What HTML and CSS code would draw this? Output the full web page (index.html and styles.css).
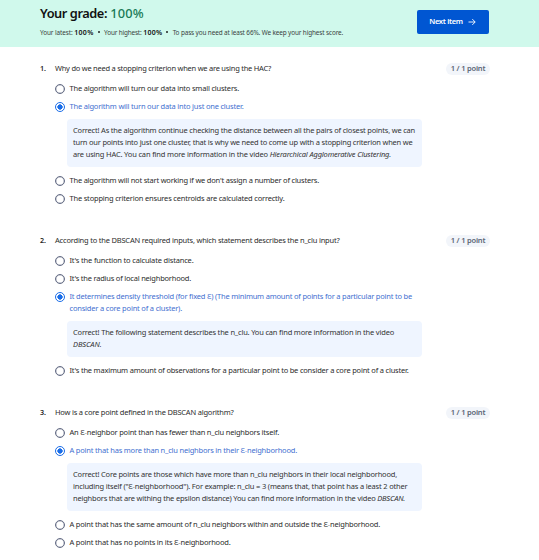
FILE: index.html
```html
<!DOCTYPE html>
<html lang="en"><head><meta charset="utf-8"><title>Quiz grade</title><link rel="stylesheet" href="styles.css"></head>
<body>
<header class="grade-bar">
<div class="grade-info"><h1><span data-w="67">Your grade:</span> <b class="score" data-w="33.5">100%</b></h1>
<p class="meta"><span data-w="32.5">Your latest:</span> <b data-w="19.5">100%</b><i class="dot"></i><span data-w="37.5">Your highest:</span> <b data-w="19">100%</b><i class="dot"></i><span data-w="170.5">To pass you need at least 66%. We keep your highest score.</span></p></div>
<button class="next"><span data-w="33.5">Next item</span><svg class="arrow" viewBox="0 0 8 8"><path d="M.5 4h6.6M4.3 1.1 7.2 4 4.3 6.9"/></svg></button>
</header>
<main>
<section class="question"><div class="prompt"><b class="num">1.</b><span data-w="216">Why do we need a stopping criterion when we are using the HAC?</span><b class="pill"><span data-w="34.5">1 / 1 point</span></b></div>
<div class="option"><i class="radio"></i><p><span data-w="169.5">The algorithm will turn our data into small clusters.</span></p></div>
<div class="option chosen"><i class="radio"></i><p><span data-w="174">The algorithm will turn our data into just one cluster.</span></p></div>
<p class="feedback"><span data-w="342">Correct! As the algorithm continue checking the distance between all the pairs of closest points, we can</span><br><span data-w="339.5">turn our points into just one cluster, that is why we need to come up with a stopping criterion when we</span><br><span data-w="318">are using HAC. You can find more information in the video <em>Hierarchical Agglomerative Clustering.</em></span></p>
<div class="option"><i class="radio"></i><p><span data-w="249.5">The algorithm will not start working if we don't assign a number of clusters.</span></p></div>
<div class="option"><i class="radio"></i><p><span data-w="215">The stopping criterion ensures centroids are calculated correctly.</span></p></div></section>
<section class="question"><div class="prompt"><b class="num">2.</b><span data-w="284.5">According to the DBSCAN required inputs, which statement describes the n_clu input?</span><b class="pill"><span data-w="34.5">1 / 1 point</span></b></div>
<div class="option"><i class="radio"></i><p><span data-w="124">It's the function to calculate distance.</span></p></div>
<div class="option"><i class="radio"></i><p><span data-w="121.5">It's the radius of local neighborhood.</span></p></div>
<div class="option chosen"><i class="radio"></i><p><span data-w="342.5">It determines density threshold (for fixed Ɛ) (The minimum amount of points for a particular point to be</span><br><span data-w="112.5">consider a core point of a cluster).</span></p></div>
<p class="feedback"><span data-w="321">Correct! The following statement describes the n_clu. You can find more information in the video</span><br><span data-w="28.5"><em>DBSCAN.</em></span></p>
<div class="option"><i class="radio"></i><p><span data-w="339">It's the maximum amount of observations for a particular point to be consider a core point of a cluster.</span></p></div></section>
<section class="question"><div class="prompt"><b class="num">3.</b><span data-w="178.5">How is a core point defined in the DBSCAN algorithm?</span><b class="pill"><span data-w="34.5">1 / 1 point</span></b></div>
<div class="option"><i class="radio"></i><p><span data-w="209.5">An Ɛ<span class="hyphen">-</span>neighbor point than has fewer than n_clu neighbors itself.</span></p></div>
<div class="option chosen"><i class="radio"></i><p><span data-w="227.5">A point that has more than n_clu neighbors in their Ɛ<span class="hyphen">-</span>neighborhood.</span></p></div>
<p class="feedback"><span data-w="324">Correct! Core points are those which have more than n_clu neighbors in their local neighborhood,</span><br><span data-w="334.5">including itself ("Ɛ<span class="hyphen">-</span>neighborhood"). For example: n_clu = 3 (means that, that point has a least 2 other</span><br><span data-w="332">neighbors that are withing the epsilon distance) You can find more information in the video <em>DBSCAN.</em></span></p>
<div class="option"><i class="radio"></i><p><span data-w="310.5">A point that has the same amount of n_clu neighbors within and outside the Ɛ<span class="hyphen">-</span>neighborhood.</span></p></div>
<div class="option"><i class="radio"></i><p><span data-w="161">A point that has no points in its Ɛ<span class="hyphen">-</span>neighborhood.</span></p></div></section>
</main>
<script src="fit.js"></script>
</body></html>
```
FILE: styles.css
```css
*{box-sizing:border-box}
body{margin:0;width:539px;height:560px;overflow:hidden;background:#fff;color:#2b2b2b;font:7.5px/12px "Noto Sans",sans-serif}
h1,p{margin:0}
[data-w]{white-space:nowrap}
.grade-bar{height:47px;padding:0 50px 0 40px;background:#d0f9ec;display:flex;justify-content:space-between}
h1{font-size:12.8px;line-height:18px;font-weight:600;margin-top:4px;color:#111}
.score{color:#197a56;font-weight:500}
.meta{font-size:6.4px;line-height:10px;margin-top:6px;color:#3a3f3d;white-space:nowrap}
.meta b{font-weight:600;font-size:7px;line-height:1;color:#111}
.dot{display:inline-block;width:2px;height:2px;border-radius:50%;background:#222;margin:0 4.4px 0 4px;vertical-align:2px}
.next{width:72px;height:24px;margin-top:10px;padding:0 1px 2px 0;border:0;border-radius:2px;background:#0056d2;color:#fff;font:600 7.6px/12px "Noto Sans",sans-serif;display:flex;align-items:center;justify-content:center;gap:5px}
.arrow{width:8px;height:8px;margin-top:2px;fill:none;stroke:#fff;stroke-width:.9}
main{padding:16px 49px 0 40px}
.question{display:flex;flex-direction:column;gap:6px;margin-bottom:30px}
.prompt{display:flex;height:12px;margin-bottom:2px;line-height:10px}
.num{width:15px;font-weight:600;font-size:7.2px;color:#1f1f1f}
.pill{margin-left:auto;width:44px;border-radius:6px;background:#f2f5fa;color:#5b6475;font-weight:600;text-align:center}
.option{display:flex;margin-left:14.5px;gap:5px;width:380px}
.option p{margin:-1px 0 1px}
.radio{width:10px;height:10px;margin-top:1px;border:1px solid #636b84;box-shadow:inset 0 0 0 .5px #636b8480;border-radius:50%;flex:none}
.chosen{color:#3f6fd0}
.chosen .radio{border-color:#1a6de8;box-shadow:none;background:radial-gradient(circle,#1a6de8 0 2.4px,#fff 2.9px)}
.feedback{margin:0 0 2px 27px;width:355px;padding:5px 6px 7px;border-radius:4px;background:#eff5ff;color:#333}
.hyphen{opacity:.55}
```
FILE: fit.js
```js
for (const el of document.querySelectorAll('[data-w]')) {
  const target = parseFloat(el.dataset.w);
  const n = el.textContent.length;
  const w = el.getBoundingClientRect().width;
  el.style.letterSpacing = ((target - w) / n).toFixed(3) + 'px';
}
```
